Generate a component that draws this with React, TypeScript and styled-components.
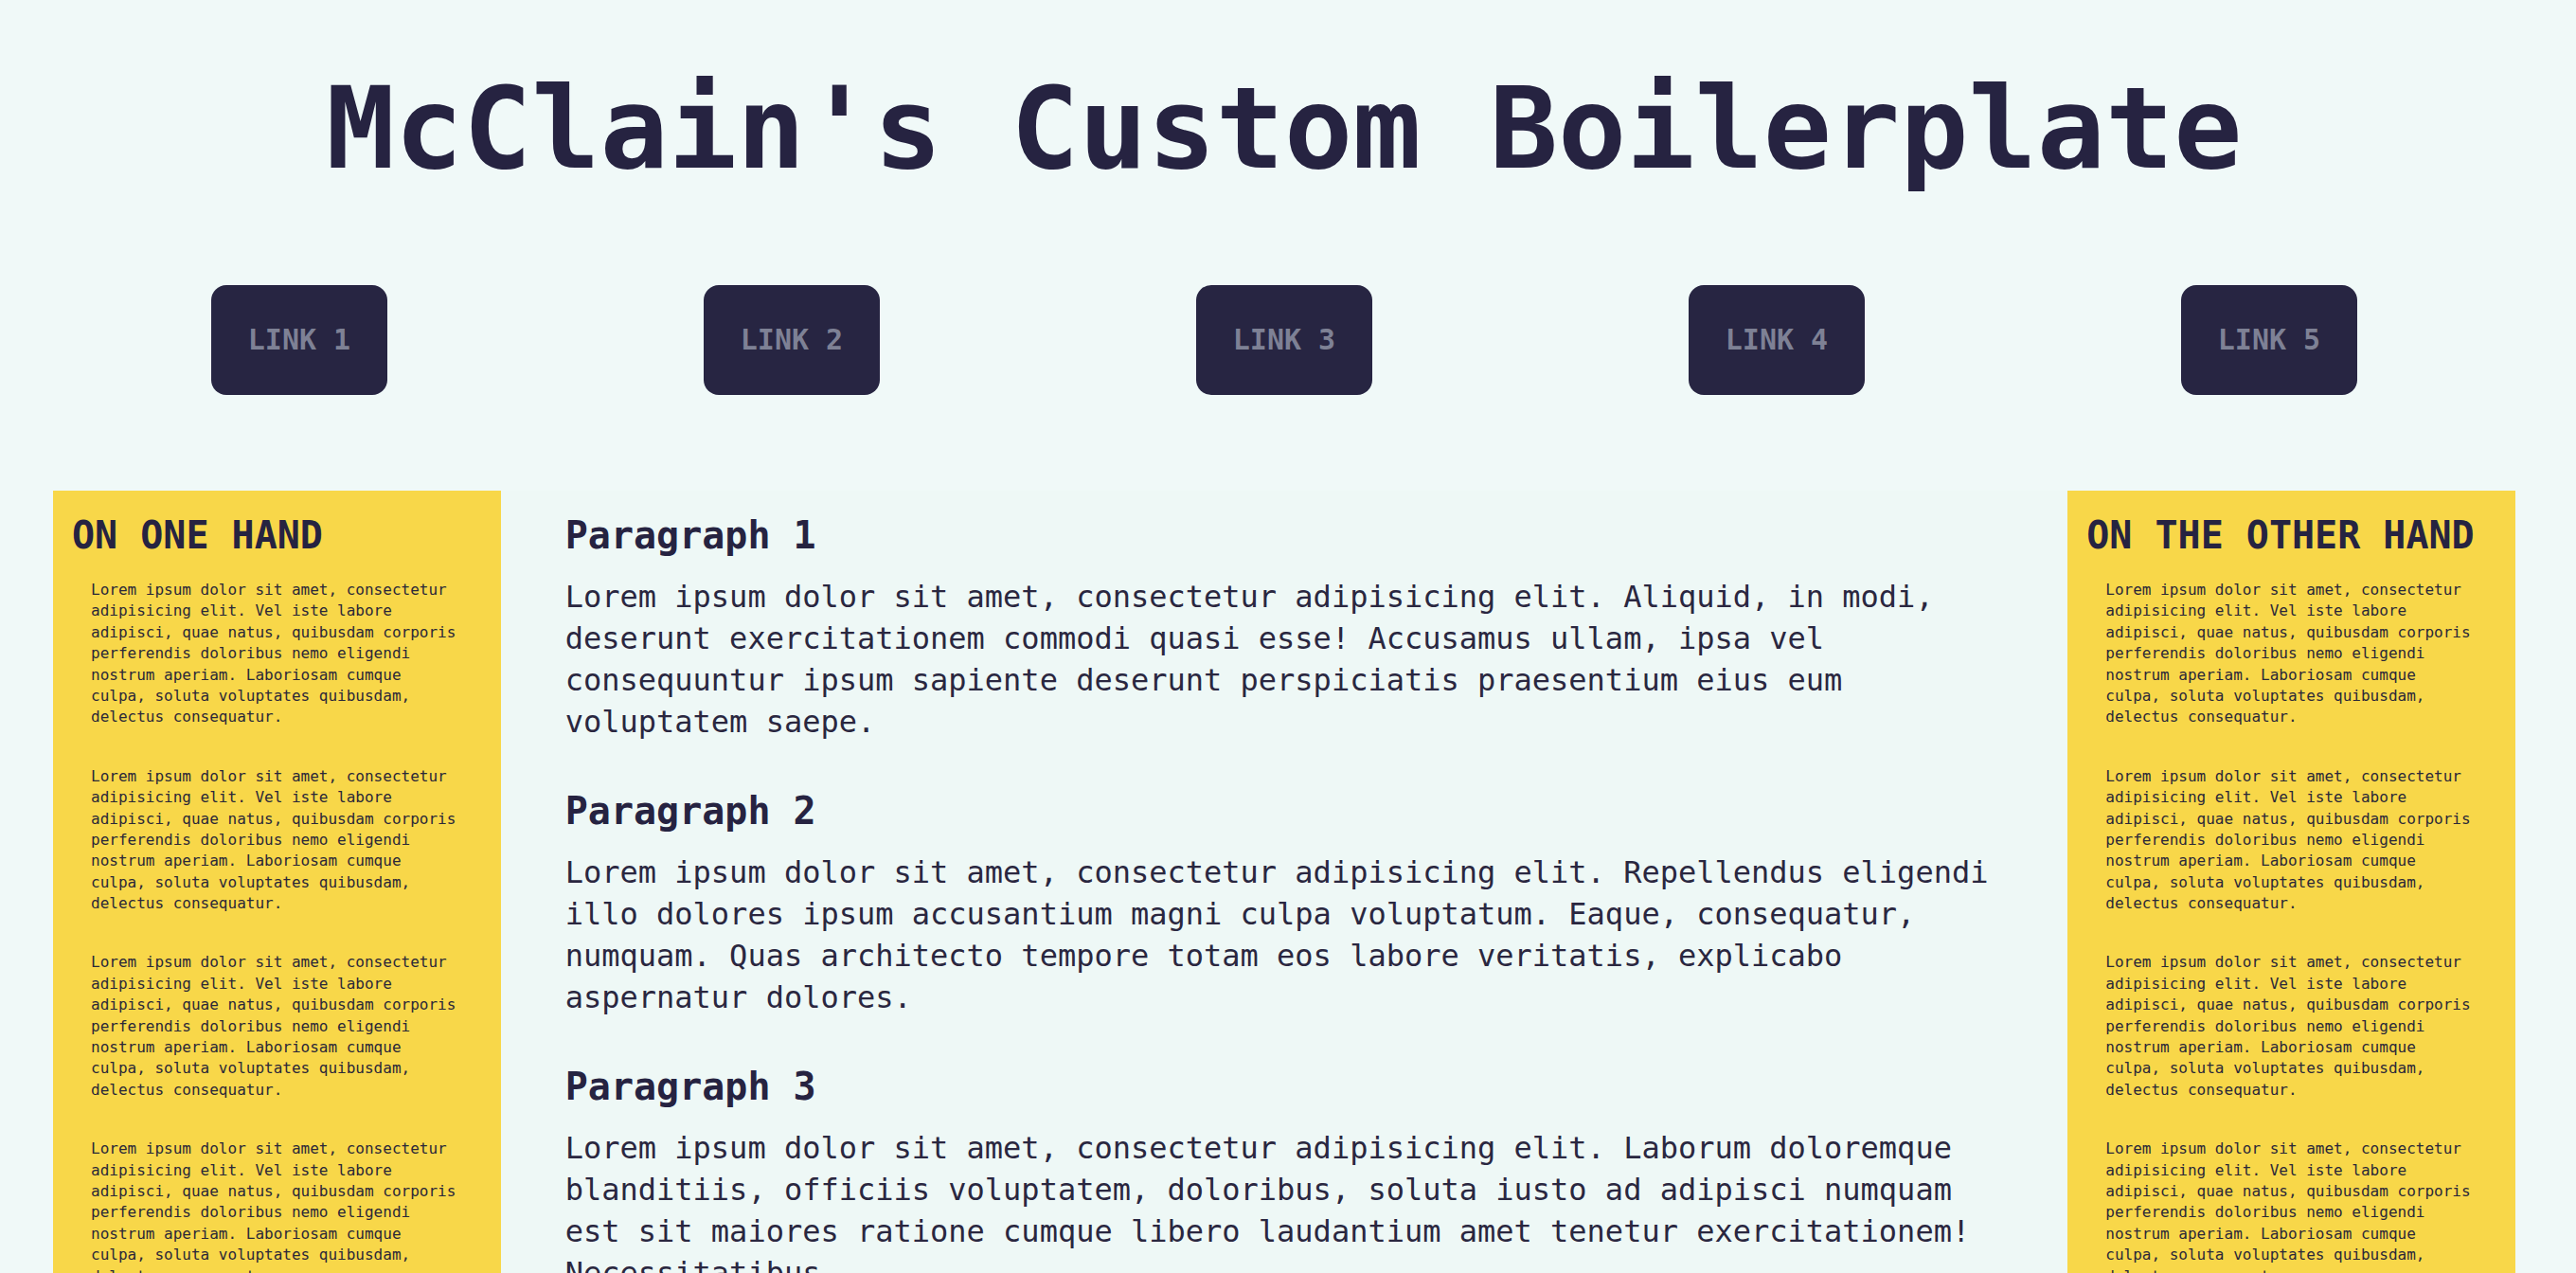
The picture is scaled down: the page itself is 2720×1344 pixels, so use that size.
import React from "react";
import styled, { createGlobalStyle } from "styled-components";

const GlobalStyle = createGlobalStyle`
  html, body {
    margin: 0;
    padding: 0;
    background: #f0f9f8;
  }
  body {
    font-family: "DejaVu Sans Mono", "Liberation Mono", monospace;
    color: #262341;
  }
  * { box-sizing: border-box; }
`;

const Page = styled.div`
  padding: 0 64px 0 56px;
`;

const Title = styled.h1`
  margin: 76px 0 0;
  font-size: 120px;
  line-height: 1;
  font-weight: 700;
  text-align: center;
  color: #262341;
`;

const Nav = styled.nav`
  display: grid;
  grid-template-columns: repeat(5, 1fr);
  justify-items: center;
  margin-top: 105px;
`;

const NavLink = styled.a`
  display: block;
  background: #272542;
  color: #7e8195;
  font-size: 30px;
  font-weight: 700;
  line-height: 36px;
  padding: 40px 39px;
  border-radius: 16px;
  text-decoration: none;
  text-transform: uppercase;
`;

const Layout = styled.div`
  display: grid;
  grid-template-columns: 2fr 7fr 2fr;
  margin-top: 101px;
  align-items: start;
`;

const Sidebar = styled.aside`
  background: #f8d749;
  padding: 20px;
`;

const Heading = styled.h2<{ $upper?: boolean }>`
  margin: 0;
  font-size: 40px;
  line-height: 54px;
  font-weight: 700;
  color: #262341;
  text-transform: ${(p) => (p.$upper ? "uppercase" : "none")};
`;

const SideText = styled.p`
  margin: 0;
  padding: 20px 24px 20px 20px;
  font-size: 16px;
  line-height: 1.4;
  color: #2b2838;
`;

const Main = styled.main`
  background: #eef8f6;
  padding: 20px 72px 20px 68px;
`;

const Section = styled.section`
  display: block;
`;

const MainText = styled.p`
  margin: 16px 0 45px;
  font-size: 32px;
  line-height: 44px;
  color: #2a2740;
`;

const sideCopy =
  "Lorem ipsum dolor sit amet, consectetur adipisicing elit. Vel iste labore adipisci, quae natus, quibusdam corporis perferendis doloribus nemo eligendi nostrum aperiam. Laboriosam cumque culpa, soluta voluptates quibusdam, delectus consequatur.";

const paragraphs = [
  {
    title: "Paragraph 1",
    text: "Lorem ipsum dolor sit amet, consectetur adipisicing elit. Aliquid, in modi, deserunt exercitationem commodi quasi esse! Accusamus ullam, ipsa vel consequuntur ipsum sapiente deserunt perspiciatis praesentium eius eum voluptatem saepe.",
  },
  {
    title: "Paragraph 2",
    text: "Lorem ipsum dolor sit amet, consectetur adipisicing elit. Repellendus eligendi illo dolores ipsum accusantium magni culpa voluptatum. Eaque, consequatur, numquam. Quas architecto tempore totam eos labore veritatis, explicabo aspernatur dolores.",
  },
  {
    title: "Paragraph 3",
    text: "Lorem ipsum dolor sit amet, consectetur adipisicing elit. Laborum doloremque blanditiis, officiis voluptatem, doloribus, soluta iusto ad adipisci numquam est sit maiores ratione cumque libero laudantium amet tenetur exercitationem! Necessitatibus.",
  },
];

const links = ["Link 1", "Link 2", "Link 3", "Link 4", "Link 5"];

const SideColumn: React.FC<{ title: string }> = ({ title }) => (
  <Sidebar>
    <Heading $upper>{title}</Heading>
    {[0, 1, 2, 3, 4, 5].map((i) => (
      <SideText key={i}>{sideCopy}</SideText>
    ))}
  </Sidebar>
);

export default function App() {
  return (
    <>
      <GlobalStyle />
      <Page>
        <Title>McClain's Custom Boilerplate</Title>
        <Nav>
          {links.map((l) => (
            <NavLink key={l} href="#">
              {l}
            </NavLink>
          ))}
        </Nav>
        <Layout>
          <SideColumn title="On one hand" />
          <Main>
            {paragraphs.map((p) => (
              <Section key={p.title}>
                <Heading>{p.title}</Heading>
                <MainText>{p.text}</MainText>
              </Section>
            ))}
          </Main>
          <SideColumn title="On the other hand" />
        </Layout>
      </Page>
    </>
  );
}
